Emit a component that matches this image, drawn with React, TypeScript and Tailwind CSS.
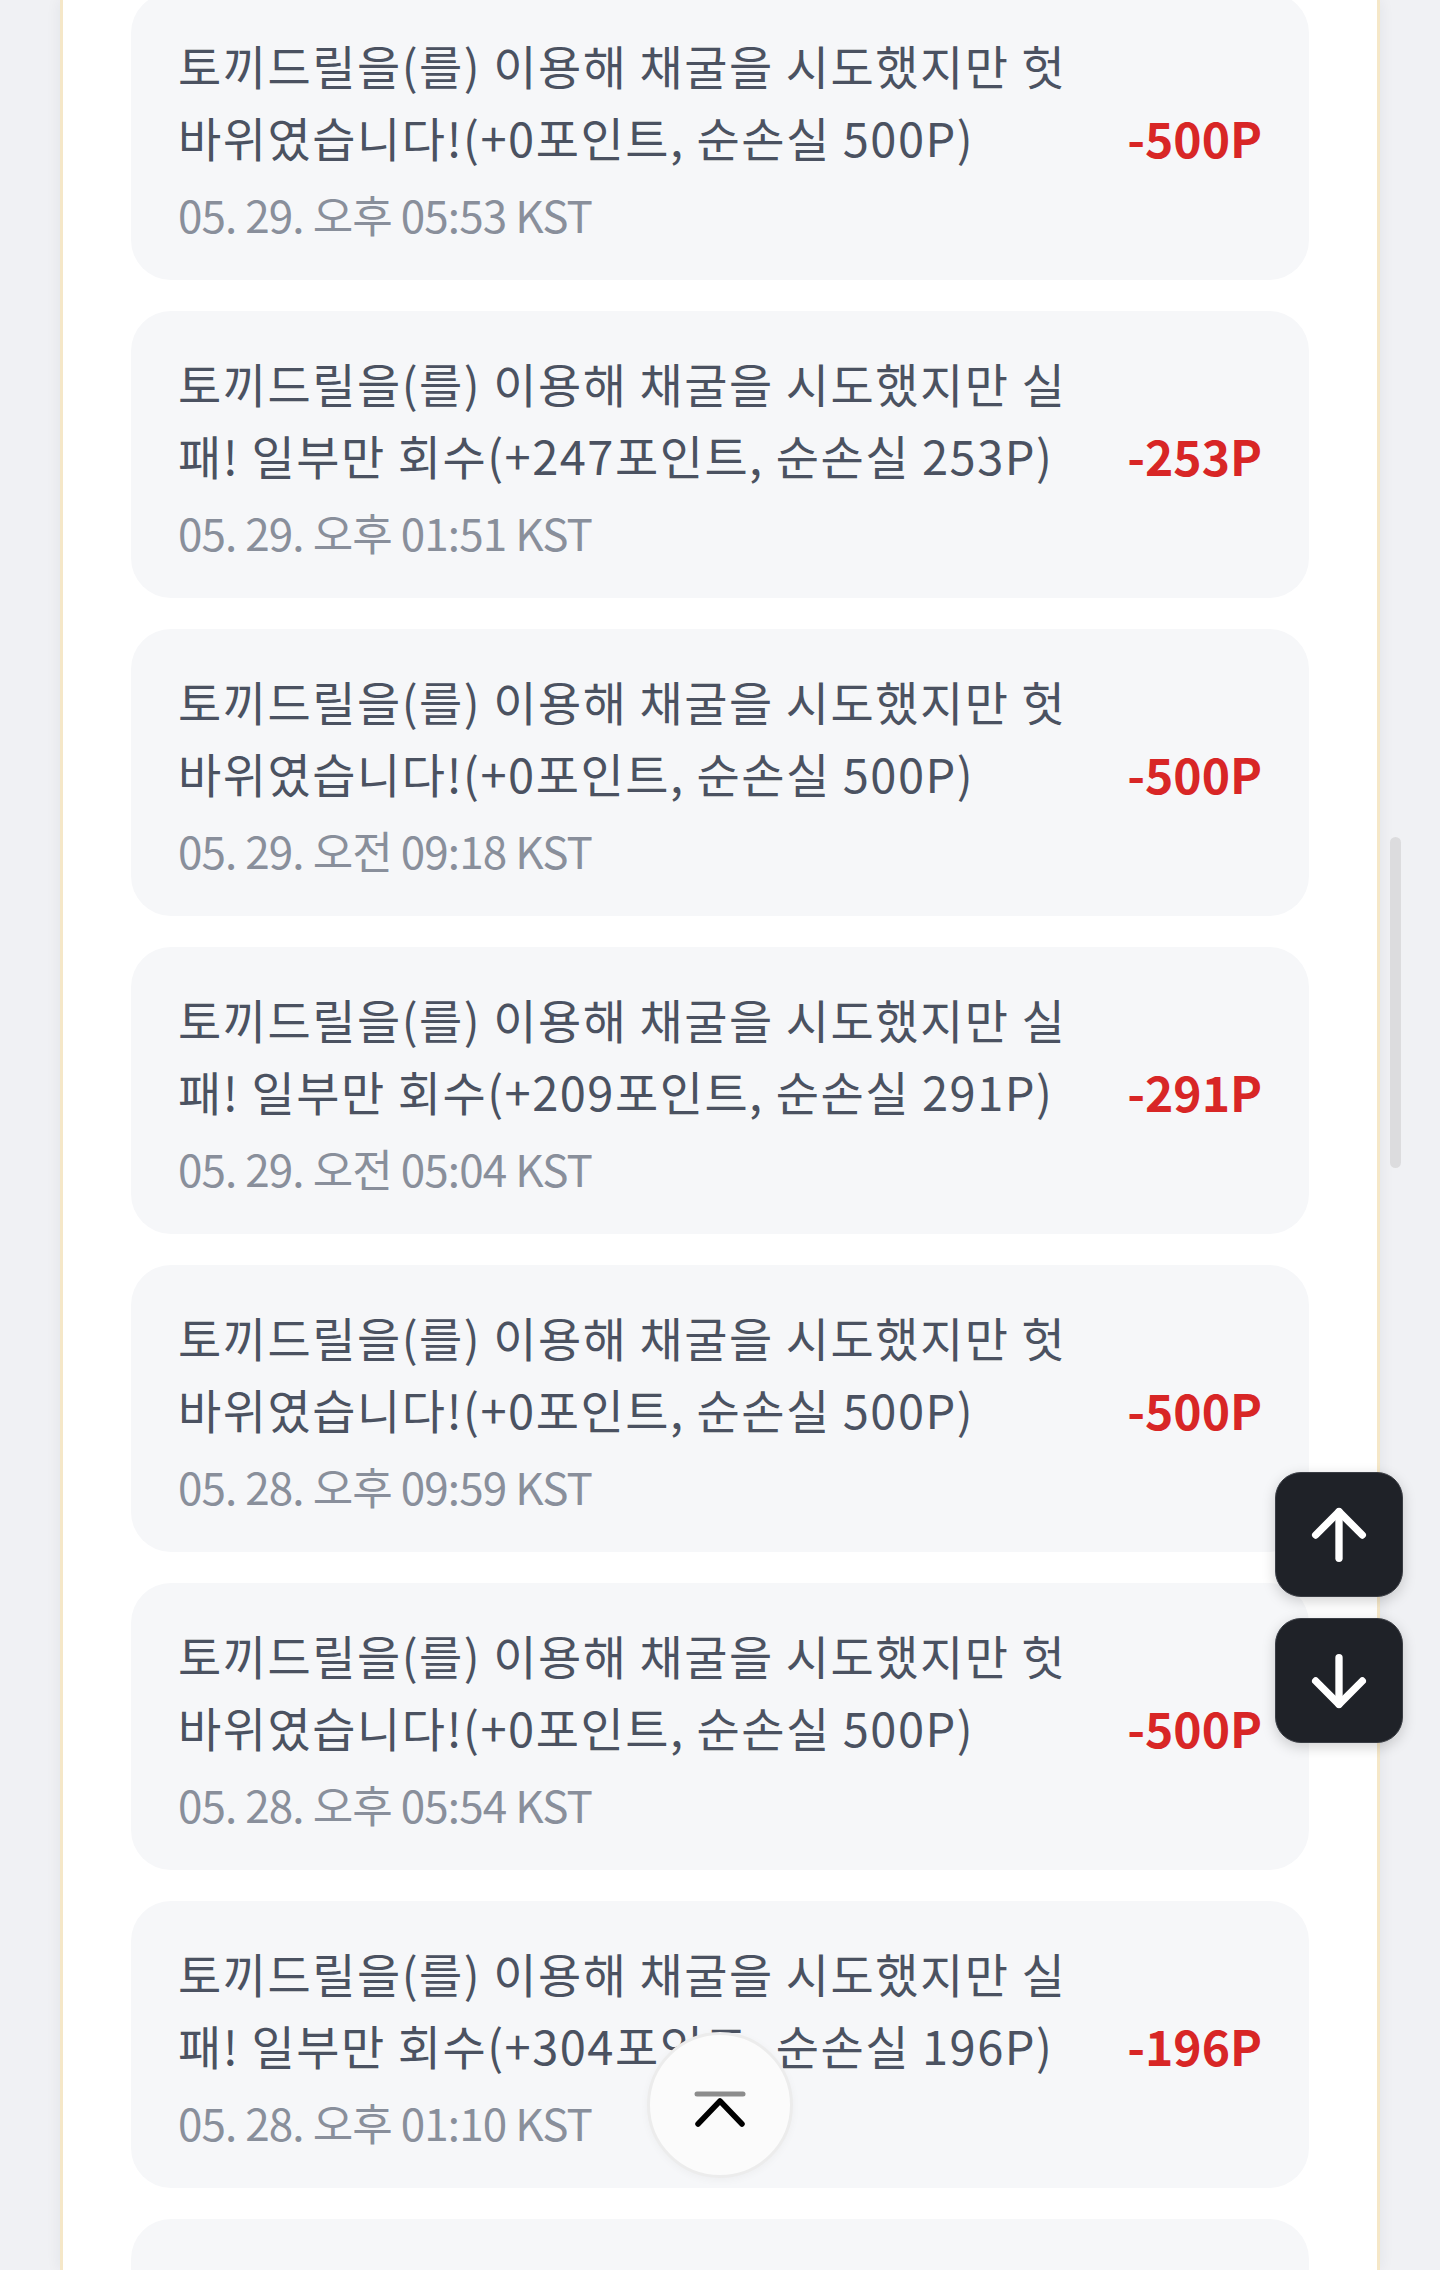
import React from "react";

type Item = { l1: string; l2: string; date: string; amount: string };

const L1A = "토끼드릴을(를) 이용해 채굴을 시도했지만 헛";
const L1B = "토끼드릴을(를) 이용해 채굴을 시도했지만 실";

const items: Item[] = [
  { l1: L1A, l2: "바위였습니다!(+0포인트, 순손실 500P)", date: "05. 29. 오후 05:53 KST", amount: "-500P" },
  { l1: L1B, l2: "패! 일부만 회수(+247포인트, 순손실 253P)", date: "05. 29. 오후 01:51 KST", amount: "-253P" },
  { l1: L1A, l2: "바위였습니다!(+0포인트, 순손실 500P)", date: "05. 29. 오전 09:18 KST", amount: "-500P" },
  { l1: L1B, l2: "패! 일부만 회수(+209포인트, 순손실 291P)", date: "05. 29. 오전 05:04 KST", amount: "-291P" },
  { l1: L1A, l2: "바위였습니다!(+0포인트, 순손실 500P)", date: "05. 28. 오후 09:59 KST", amount: "-500P" },
  { l1: L1A, l2: "바위였습니다!(+0포인트, 순손실 500P)", date: "05. 28. 오후 05:54 KST", amount: "-500P" },
  { l1: L1B, l2: "패! 일부만 회수(+304포인트, 순손실 196P)", date: "05. 28. 오후 01:10 KST", amount: "-196P" },
];

function Card({ it }: { it: Item }) {
  return (
    <div className="flex items-center justify-between rounded-[40px] bg-[#f6f7f9] pl-[47px] pr-[47px] h-[287px] shrink-0">
      <div className="flex flex-col self-start pt-[36px]">
        <p className="text-[47px] leading-[72px] tracking-[1.5px] text-[#4b5261] whitespace-nowrap">
          <span className="block">{it.l1}</span>
          <span className="block">{it.l2}</span>
        </p>
        <div className="text-[44px] leading-[82px] tracking-[-0.9px] text-[#898f9b] whitespace-nowrap">{it.date}</div>
      </div>
      <div className="text-[48px] font-bold text-[#d82626] leading-none whitespace-nowrap">{it.amount}</div>
    </div>
  );
}

export default function App() {
  return (
    <div
      className="relative w-[1440px] h-[2270px] overflow-hidden bg-[#f0f1f4] px-[60px]"
      style={{ fontFamily: '"Noto Sans CJK KR", "Noto Sans", sans-serif' }}
    >
      <div className="flow-root h-full bg-white border-x-[3px] border-[#f5e7c8] shadow-[0_0_14px_rgba(30,40,70,0.07)] px-[68px]">
        <div className="flex flex-col gap-[31px] -mt-[7px]">
          {items.map((it, i) => (
            <Card key={i} it={it} />
          ))}
          <div className="rounded-[40px] bg-[#f6f7f9] h-[287px] shrink-0" />
        </div>
      </div>

      {/* scrollbar thumb */}
      <div className="absolute left-[1390px] top-[837px] w-[11px] h-[331px] rounded-full bg-[#dcdcde]" />

      {/* up / down buttons */}
      <div className="absolute left-[1275px] top-[1472px] flex flex-col gap-[21px]">
        <button className="w-[128px] h-[125px] rounded-[26px] bg-[#1f2228] border border-[#3a3d44] shadow-[0_4px_14px_rgba(0,0,0,0.18)] flex items-center justify-center">
          <svg width="80" height="80" viewBox="0 0 24 24" fill="none" stroke="white" strokeWidth="2.2" strokeLinecap="round" strokeLinejoin="round">
            <path d="m5 12 7-7 7 7" />
            <path d="M12 19V5" />
          </svg>
        </button>
        <button className="w-[128px] h-[125px] rounded-[26px] bg-[#1f2228] border border-[#3a3d44] shadow-[0_4px_14px_rgba(0,0,0,0.18)] flex items-center justify-center">
          <svg width="80" height="80" viewBox="0 0 24 24" fill="none" stroke="white" strokeWidth="2.2" strokeLinecap="round" strokeLinejoin="round">
            <path d="M12 5v14" />
            <path d="m19 12-7 7-7-7" />
          </svg>
        </button>
      </div>

      {/* scroll to top circle */}
      <button className="absolute left-[647px] top-[2032px] w-[146px] h-[146px] rounded-full bg-[#fbfbfb] border-[3px] border-[#ececec] shadow-[0_2px_8px_rgba(0,0,0,0.04)]">
        <svg className="absolute left-[-3px] top-[-3px]" width="146" height="146" viewBox="0 0 146 146" fill="none" strokeLinecap="round" strokeLinejoin="round">
          <path d="M50 62 H96" stroke="#8c8c8c" strokeWidth="5" />
          <path d="M51 92 L73 69 L95 92" stroke="#000" strokeWidth="5.5" />
        </svg>
      </button>
    </div>
  );
}
